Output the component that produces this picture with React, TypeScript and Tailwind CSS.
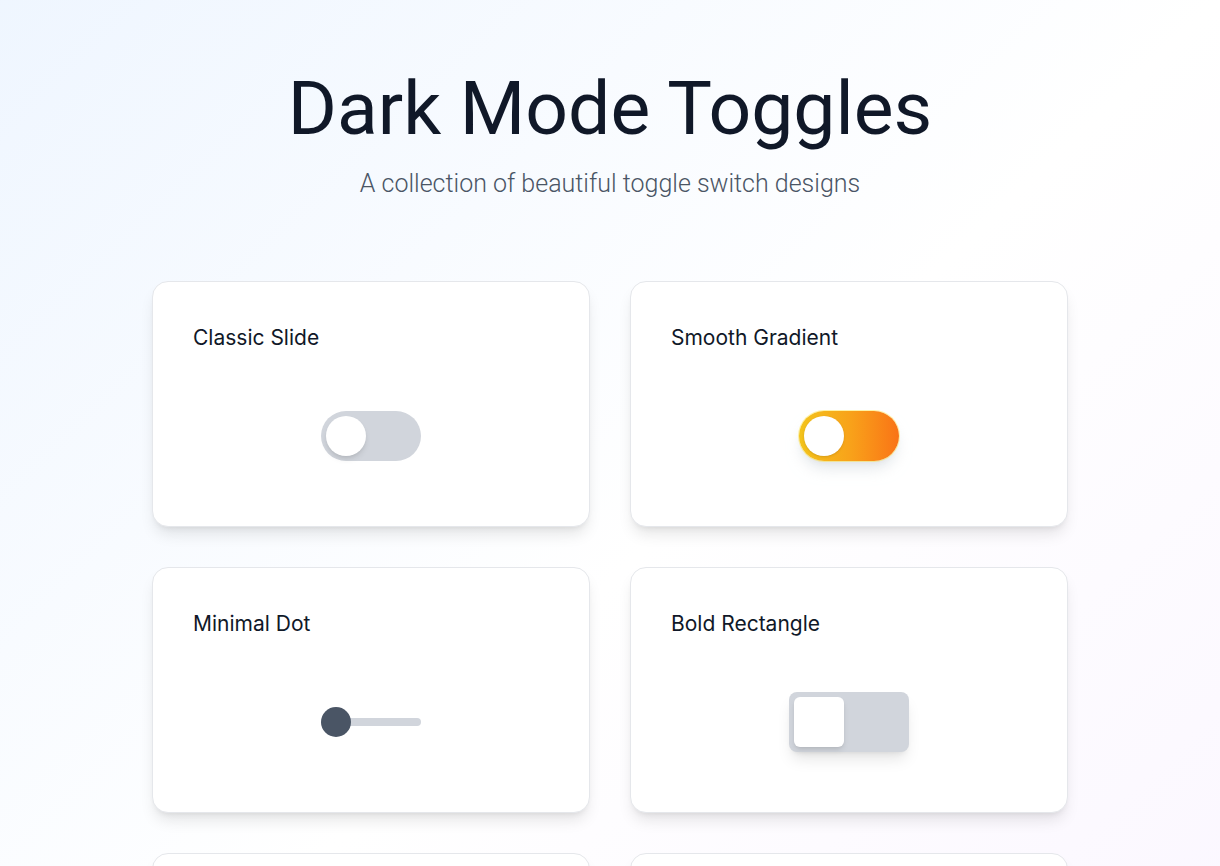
import React from 'react';

// Card wrapper shared by all toggle demos
const Card = ({ title, children }: { title: string; children: React.ReactNode }) => (
  <div className="bg-white border border-gray-200 rounded-2xl shadow-lg px-10 pt-[42px] pb-[65px]">
    <h3 className="text-[21px] font-normal text-gray-900 leading-7 font-['Inter',sans-serif]">{title}</h3>
    <div className="mt-[59px] h-[50px] flex items-center justify-center">{children}</div>
  </div>
);

const ClassicSlide = () => (
  <div className="w-[100px] h-[50px] rounded-full bg-gray-300 p-[5px] flex items-center">
    <div className="w-10 h-10 rounded-full bg-white shadow-md" />
  </div>
);

const SmoothGradient = () => (
  <div className="w-[100px] h-[50px] rounded-full bg-gradient-to-r from-[#f3c41c] via-[#f8a31a] to-[#f97316] p-[5px] flex items-center shadow-lg shadow-gray-300/60 ring-1 ring-yellow-300/40">
    <div className="w-10 h-10 rounded-full bg-white shadow-sm" />
  </div>
);

const MinimalDot = () => (
  <div className="relative w-[100px] h-[30px] flex items-center">
    <div className="w-full h-2 rounded-full bg-gray-300" />
    <div className="absolute left-0 top-0 w-[30px] h-[30px] rounded-full bg-gray-600" />
  </div>
);

const BoldRectangle = () => (
  <div className="w-[120px] h-[60px] rounded-lg bg-gray-300 p-[5px] flex items-center shadow-lg">
    <div className="w-[50px] h-[50px] rounded-md bg-white shadow-md" />
  </div>
);

const IconToggle = () => (
  <div className="w-[100px] h-[50px] rounded-full bg-slate-200 p-[5px] flex items-center">
    <div className="w-10 h-10 rounded-full bg-white shadow-md" />
  </div>
);

export default function App() {
  return (
    <div className="min-h-screen bg-gradient-to-br from-blue-50 via-white to-purple-50 font-['Roboto',sans-serif]">
      <header className="pt-[71px] text-center">
        <h1 className="text-[75px] font-normal text-gray-900 leading-none">Dark Mode Toggles</h1>
        <p className="mt-[22px] text-[25px] font-light text-gray-600 leading-8">
          A collection of beautiful toggle switch designs
        </p>
      </header>

      <main className="mx-auto mt-[81px] w-[916px] grid grid-cols-2 gap-x-10 gap-y-10 pb-16">
        <Card title="Classic Slide"><ClassicSlide /></Card>
        <Card title="Smooth Gradient"><SmoothGradient /></Card>
        <Card title="Minimal Dot"><MinimalDot /></Card>
        <Card title="Bold Rectangle"><BoldRectangle /></Card>
        <Card title="Icon Switch"><IconToggle /></Card>
        <Card title="Neon Glow"><ClassicSlide /></Card>
      </main>
    </div>
  );
}
